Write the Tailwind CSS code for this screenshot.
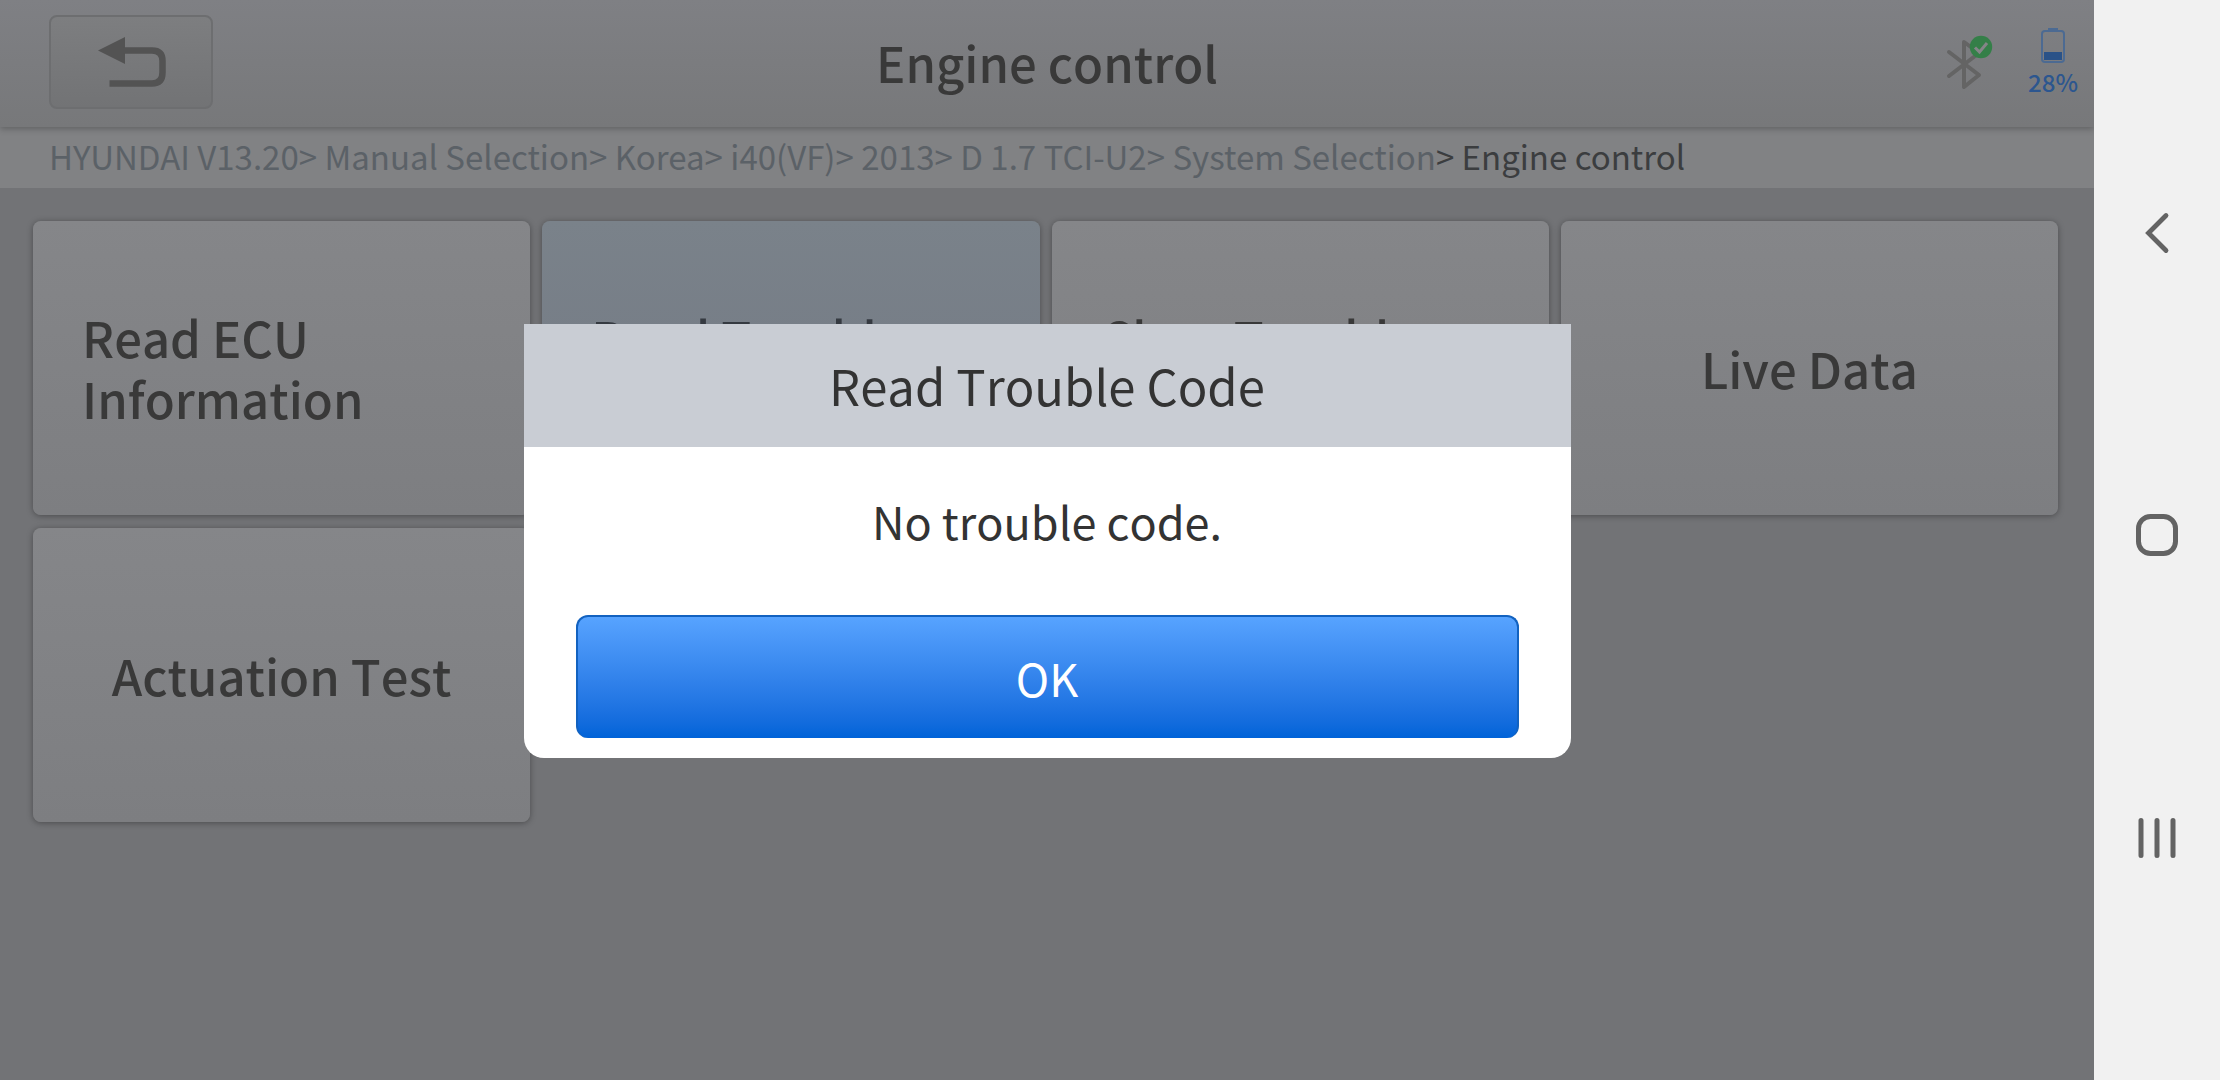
<!DOCTYPE html>
<html lang="en">
<head>
<meta charset="utf-8">
<meta name="viewport" content="width=device-width, initial-scale=1">
<title>Engine control</title>
<script src="https://cdn.jsdelivr.net/npm/@tailwindcss/browser@4"></script>
</head>
<body class="flex min-h-screen bg-[#727376] font-['Noto_Sans_CJK_SC','Noto_Sans',sans-serif] text-[#393939] [font-kerning:none]">

<div class="relative flex min-w-0 flex-1 flex-col overflow-hidden">
  <header class="relative z-10 grid h-[127px] grid-cols-[1fr_auto_1fr] items-center bg-linear-to-b from-[#7f8084] to-[#77787a] px-4 pb-1 shadow-[0_2px_6px_rgba(0,0,0,0.25)]">
    <button type="button" aria-label="Back" class="ml-[33px] flex h-[94px] w-[164px] items-center justify-center rounded-lg border-2 border-[#6d6e70] bg-linear-to-b from-[#7d7e80] to-[#727375]">
      <svg width="70" height="52" viewBox="0 0 70 52" fill="none">
        <path d="M2 14.500L29 1V28Z" fill="#535353"/>
        <path d="M27 14.500H56Q66.500 14.500 66.500 25V36.500Q66.500 47.500 56 47.500H13.500" stroke="#535353" stroke-width="6.500"/>
      </svg>
    </button>
    <h1 class="text-[49px] leading-[74px] font-medium">Engine control</h1>
    <div class="flex items-center justify-end gap-[34px]">
      <svg role="img" aria-label="Bluetooth connected" width="48" height="56" viewBox="0 0 48 56" fill="none">
        <path d="M3 18L33 41L18 53V8L33 19L3 42" stroke="#646464" stroke-width="4" stroke-linecap="round" stroke-linejoin="round"/>
        <circle cx="35" cy="13" r="11.200" fill="#347f48"/>
        <path d="M29 13.500L33.500 18L41 9" stroke="#848588" stroke-width="3"/>
      </svg>
      <div class="flex flex-col items-center pt-1 text-2xl leading-9 font-medium text-[#2c568f]">
        <svg aria-hidden="true" width="24" height="36" viewBox="0 0 24 36" fill="none">
          <rect x="7" y="0" width="10" height="3" fill="#4c6a92"/>
          <rect x="1" y="3" width="22" height="31" rx="3" stroke="#4c6a92" stroke-width="2"/>
          <rect x="3" y="24" width="18" height="8" fill="#2a5288"/>
        </svg>
        <span>28%</span>
      </div>
    </div>
  </header>

  <nav aria-label="Breadcrumb" class="h-[61px] bg-[#818284] pl-[49px] text-[33px] leading-[59px] whitespace-nowrap text-[#5b6167] [font-kerning:normal]">
    <a href="#">HYUNDAI V13.20</a>&gt;
    <a href="#">Manual Selection</a>&gt;
    <a href="#">Korea</a>&gt;
    <a href="#">i40(VF)</a>&gt;
    <a href="#">2013</a>&gt;
    <a href="#">D 1.7 TCI-U2</a>&gt;
    <a href="#">System Selection</a><span class="text-[#3b3d3f]">&gt; <span aria-current="page">Engine control</span></span>
  </nav>

  <main class="grid auto-rows-[294px] grid-cols-4 gap-x-3 gap-y-[13px] pt-[33px] pr-9 pb-8 pl-[33px] text-[49px] leading-[61px] font-medium">
    <button type="button" class="flex items-center rounded-lg bg-linear-to-b from-[#858689] to-[#7d7e81] px-[49px] pb-0.5 text-left shadow-[0_1px_6px_rgba(0,0,0,0.35)]">Read ECU Information</button>
    <button type="button" class="flex items-center rounded-lg bg-linear-to-b from-[#7a828a] to-[#727883] px-[49px] pb-0.5 text-left text-[#353a41] shadow-[0_1px_6px_rgba(0,0,0,0.35)]">Read Trouble Code</button>
    <button type="button" class="flex items-center rounded-lg bg-linear-to-b from-[#858689] to-[#7d7e81] px-[49px] pb-0.5 text-left shadow-[0_1px_6px_rgba(0,0,0,0.35)]">Clear Trouble Code</button>
    <button type="button" class="flex items-center justify-center rounded-lg bg-linear-to-b from-[#858689] to-[#7d7e81] px-[49px] pb-0.5 shadow-[0_1px_6px_rgba(0,0,0,0.35)]">Live Data</button>
    <button type="button" class="flex items-center justify-center rounded-lg bg-linear-to-b from-[#858689] to-[#7d7e81] px-[49px] pb-0.5 shadow-[0_1px_6px_rgba(0,0,0,0.35)]">Actuation Test</button>
  </main>

  <!-- Result dialog over the function list -->
  <div class="absolute inset-0 z-20 flex items-center justify-center pt-0.5">
    <section role="dialog" aria-modal="true" aria-labelledby="dialog-title" class="w-1/2 rounded-b-[20px] bg-white pb-5 text-center text-[#333]">
      <h2 id="dialog-title" class="bg-[#c9cdd4] pb-0.5 text-[49px] leading-[121px]">Read Trouble Code</h2>
      <p class="pt-[30px] pb-[50px] text-[45px] leading-[88px]">No trouble code.</p>
      <div class="px-[52px]">
        <button type="button" class="h-[123px] w-full rounded-xl border-2 border-b-0 border-[#1262c0] bg-linear-to-b from-[#57a3ff] to-[#0063d8] text-[45px] text-white">OK</button>
      </div>
    </section>
  </div>
</div>

<!-- System navigation -->
<aside class="flex w-[126px] shrink-0 flex-col bg-[#f1f1f1] pt-[82px] pb-[91px]">
  <button type="button" aria-label="Go back" class="flex flex-1 items-center justify-center">
    <svg width="44" height="44" viewBox="0 0 44 44" fill="none"><path d="M31 4.500L13.500 22L31 39.500" stroke="#636363" stroke-width="4.800" stroke-linecap="round"/></svg>
  </button>
  <button type="button" aria-label="Home" class="flex flex-1 items-center justify-center">
    <svg width="44" height="44" viewBox="0 0 44 44" fill="none"><rect x="3.500" y="3.500" width="37" height="37" rx="12" stroke="#636363" stroke-width="5"/></svg>
  </button>
  <button type="button" aria-label="Recent apps" class="flex flex-1 items-center justify-center">
    <svg width="44" height="44" viewBox="0 0 44 44" fill="none"><path d="M6 4.500V39.500M22 4.500V39.500M38 4.500V39.500" stroke="#636363" stroke-width="5" stroke-linecap="round"/></svg>
  </button>
</aside>

</body>
</html>
